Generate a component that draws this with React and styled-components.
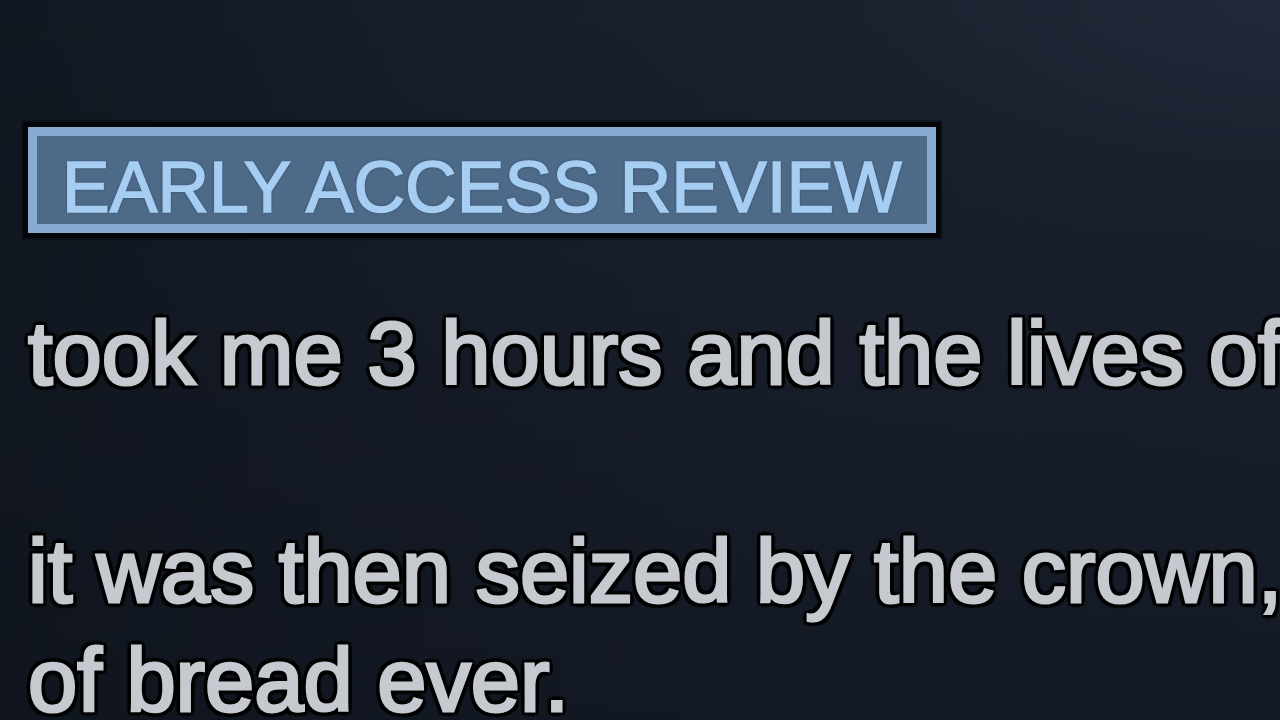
import React from "react";
import styled, { createGlobalStyle } from "styled-components";

const GlobalStyle = createGlobalStyle`
  html, body {
    margin: 0;
    padding: 0;
    width: 1280px;
    height: 720px;
    overflow: hidden;
  }
  body {
    background: #151b26;
    font-family: "Liberation Sans", Arial, Helvetica, sans-serif;
  }
`;

const Page = styled.main`
  width: 1280px;
  height: 720px;
  overflow: hidden;
  box-sizing: border-box;
  padding: 127px 0 0 28px;
  background:
    radial-gradient(ellipse 45% 35% at 100% 0%, rgba(36, 44, 60, 0.7), rgba(36, 44, 60, 0) 75%),
    linear-gradient(180deg, rgba(0, 0, 0, 0) 0%, rgba(12, 17, 25, 0.5) 100%),
    linear-gradient(95deg, #121821 0%, #171d29 30%, #1a212e 60%, #1b2230 100%);
`;

const Review = styled.article`
  display: flex;
  flex-direction: column;
  align-items: flex-start;
  gap: 66px;
`;

const Badge = styled.div`
  box-sizing: border-box;
  border: 9px solid #88acd1;
  box-shadow: 0 0 0 5px #04060a, 0 0 2px 6px rgba(0, 0, 0, 0.5);
  background: #4d6a89;
  color: #a6cdf2;
  font-size: 71.5px;
  line-height: 70px;
  padding: 16px 25px 2px 25px;
  white-space: nowrap;
  text-transform: uppercase;
  -webkit-text-stroke: 1.5px #a6cdf2;
  text-shadow: 0 0 3px rgba(10, 20, 35, 0.6);
`;

const ReviewText = styled.div`
  color: #c6cad0;
  font-size: 88.5px;
  line-height: 109px;
  white-space: nowrap;
  -webkit-text-stroke: 3px #c6cad0;
  text-shadow:
    -5px 0 1px #000, 5px 0 1px #000, 0 -5px 1px #000, 0 5px 1px #000,
    -4px -4px 1px #000, 4px -4px 1px #000, -4px 4px 1px #000, 4px 4px 1px #000,
    0 0 5px #000;
`;

const Line = styled.div`
  min-height: 109px;
`;

export default function App() {
  return (
    <>
      <GlobalStyle />
      <Page>
        <Review>
          <Badge>Early Access Review</Badge>
          <ReviewText>
            <Line>took me 3 hours and the lives of</Line>
            <Line />
            <Line>it was then seized by the crown,</Line>
            <Line>of bread ever.</Line>
          </ReviewText>
        </Review>
      </Page>
    </>
  );
}
